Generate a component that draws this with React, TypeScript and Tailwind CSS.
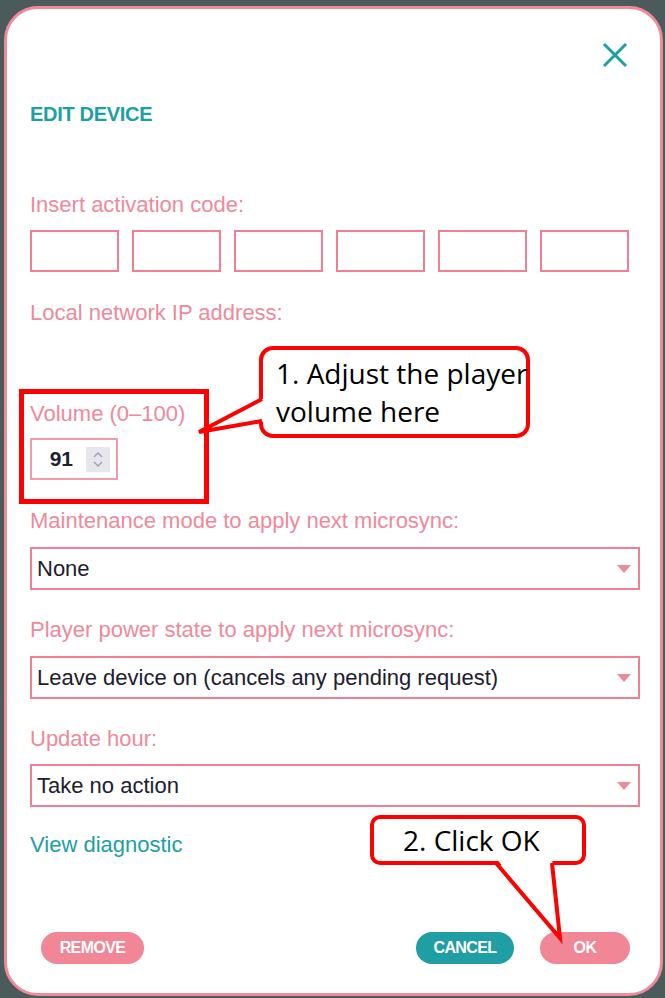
import React from 'react';

interface FieldProps {
  value: string;
  className?: string;
}

function SelectField({ value, className = '' }: FieldProps) {
  return (
    <div
      className={`flex h-[43px] items-center justify-between border-2 border-[#f27f91] bg-white pl-[5px] pr-[7px] ${className}`}
    >
      <span className="text-[22px] leading-[26px] text-[#1d2030]">{value}</span>
      <svg width="14" height="8" viewBox="0 0 14 8">
        <polygon points="0,0 14,0 7,8" fill="#f0899a" />
      </svg>
    </div>
  );
}

function Label({ children, className = '' }: { children: React.ReactNode; className?: string }) {
  return (
    <div className={`text-[22px] leading-[26px] text-[#f0899a] ${className}`}>{children}</div>
  );
}

function Callouts() {
  return (
    <>
      {/* highlight around the volume field */}
      <div className="absolute left-[19px] top-[389px] h-[115px] w-[190px] border-[5px] border-[#ff0000]" />

      <div className="absolute left-[259px] top-[346px] flex h-[92px] w-[271px] flex-col justify-center rounded-[14px] border-4 border-[#ff0000] bg-white pl-[13px] font-['Open_Sans',sans-serif] text-[28px] leading-[38px] text-black">
        <span className="whitespace-nowrap">1. Adjust the player</span>
        <span className="whitespace-nowrap">volume here</span>
      </div>

      <div className="absolute left-[370px] top-[815px] flex h-[50px] w-[216px] items-center rounded-[10px] border-4 border-[#ff0000] bg-white pl-[29px] font-['Open_Sans',sans-serif] text-[28px] leading-[38px] text-black">
        <span className="whitespace-nowrap">2. Click OK</span>
      </div>

      <svg className="pointer-events-none absolute left-0 top-0" width="665" height="998">
        <polygon points="266,397 199,432 266,421" fill="#ffffff" />
        <polyline
          points="262,399 199,432 262,421"
          fill="none"
          stroke="#ff0000"
          strokeWidth="4"
          strokeLinejoin="miter"
        />
        <polygon points="496,858 560,938 552,858" fill="#ffffff" />
        <polyline
          points="496,863 560,938 552,863"
          fill="none"
          stroke="#ff0000"
          strokeWidth="4"
          strokeLinejoin="miter"
        />
      </svg>
    </>
  );
}

export default function App() {
  return (
    <div className="relative h-[998px] w-[665px] overflow-hidden bg-[#4b5b5c] pl-[4px] pt-[6px] font-['Liberation_Sans',Arial,sans-serif]">
      <div className="flex h-[990px] w-[659px] flex-col rounded-[34px] border-[3px] border-[#f38a9b] bg-white pl-[23px] pr-[20px] pt-[33px] pb-[29px]">
        <div className="flex justify-end">
          <svg className="mr-[12px]" width="26" height="26" viewBox="0 0 26 26">
            <path d="M2 2 L24 24 M24 2 L2 24" stroke="#1ba0a7" strokeWidth="3" fill="none" />
          </svg>
        </div>

        <div className="mt-[33px] text-[20px] font-bold leading-[26px] tracking-[-0.3px] text-[#1ba0a7]">
          EDIT DEVICE
        </div>

        <Label className="mt-[65px]">Insert activation code:</Label>
        <div className="mt-[12px] flex gap-[13px]">
          {[0, 1, 2, 3, 4, 5].map((i) => (
            <div key={i} className="h-[42px] w-[89px] border-2 border-[#f27f91]" />
          ))}
        </div>

        <Label className="mt-[28px]">Local network IP address:</Label>

        <Label className="mt-[75px] text-[21px]">Volume (0–100)</Label>
        <div className="mt-[11px] flex h-[42px] w-[88px] items-center justify-end gap-[13px] border-2 border-[#f49aa8] pr-[6px]">
          <span className="text-[21px] font-bold text-[#1d2233]">91</span>
          <div className="flex h-[25px] w-[24px] flex-col items-center justify-center gap-[3px] bg-[#e6e6ec]">
            <svg width="10" height="6" viewBox="0 0 10 6">
              <path d="M1 5 L5 1 L9 5" stroke="#9a9eac" strokeWidth="1.3" fill="none" />
            </svg>
            <svg width="10" height="6" viewBox="0 0 10 6">
              <path d="M1 1 L5 5 L9 1" stroke="#9a9eac" strokeWidth="1.3" fill="none" />
            </svg>
          </div>
        </div>

        <Label className="mt-[28px]">Maintenance mode to apply next microsync:</Label>
        <SelectField className="mt-[13px]" value="None" />

        <Label className="mt-[27px]">Player power state to apply next microsync:</Label>
        <SelectField className="mt-[13px] h-[42px]" value="Leave device on (cancels any pending request)" />

        <Label className="mt-[27px]">Update hour:</Label>
        <SelectField className="mt-[12px] h-[42px]" value="Take no action" />

        <div className="mt-[25px] text-[22px] leading-[26px] text-[#1ba0a7]">View diagnostic</div>

        <div className="mt-auto flex items-center">
          <button className="ml-[11px] h-[32px] w-[103px] rounded-full bg-[#f08696] text-[16px] font-bold tracking-[-0.6px] text-white">
            REMOVE
          </button>
          <button className="ml-auto h-[32px] w-[98px] rounded-full bg-[#1f9ea4] text-[16px] font-bold tracking-[-0.6px] text-white">
            CANCEL
          </button>
          <button className="ml-[26px] mr-[10px] h-[32px] w-[90px] rounded-full bg-[#f08696] text-[16px] font-bold tracking-[-0.6px] text-white">
            OK
          </button>
        </div>
      </div>

      <Callouts />
    </div>
  );
}
